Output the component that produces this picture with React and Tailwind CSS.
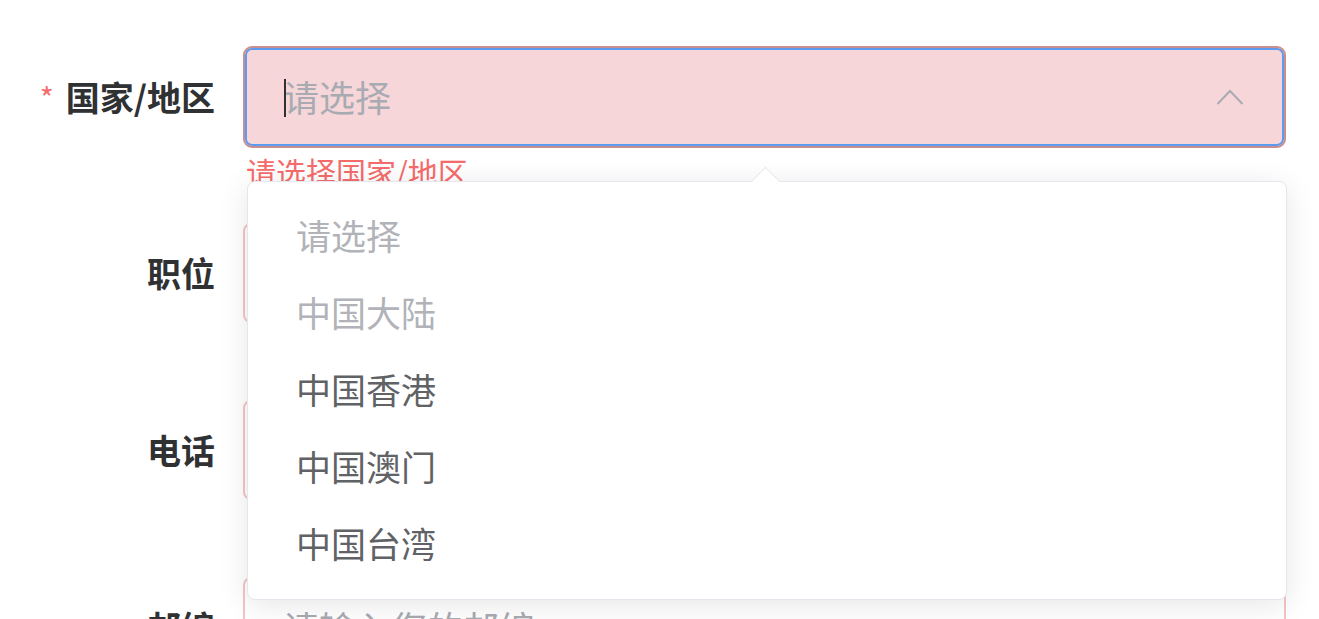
import React from "react";

const FONT = { fontFamily: '"Noto Sans CJK SC", "Noto Sans", sans-serif' };

function Label({ children, required }) {
  return (
    <div className="w-[215px] shrink-0 flex items-center justify-end text-[34px] font-bold text-[#303133] leading-none">
      {required && <span className="text-[#f56c6c] mr-[12px] text-[30px] font-normal">*</span>}
      <span>{children}</span>
    </div>
  );
}

function PlainInput({ placeholder }) {
  return (
    <div className="w-[1043px] h-[100px] rounded-[8px] border-2 border-[#f5c4c4] bg-white flex items-center pl-[38px] text-[36px] text-[#a8abb2]">
      {placeholder}
    </div>
  );
}

export default function App() {
  const options = [
    { t: "请选择", d: true },
    { t: "中国大陆", d: true },
    { t: "中国香港" },
    { t: "中国澳门" },
    { t: "中国台湾" },
  ];
  return (
    <div className="w-[1319px] h-[619px] overflow-hidden bg-white relative" style={FONT}>
      <div className="pt-[46px] flex flex-col">
        {/* Row 1 */}
        <div className="flex items-center gap-[28px] h-[102px] relative z-10">
          <Label required>国家/地区</Label>
          <div className="relative w-[1043px] h-[102px]">
            <div className="w-full h-full rounded-[9px] border-2 border-[#c98f8f] bg-[#f7d6d9] shadow-[inset_0_0_0_2px_#5b9cf0] flex items-center pl-[38px] pr-[40px] relative">
              <span className="absolute left-[39px] top-[31px] w-[2px] h-[38px] bg-[#303133]" />
              <span className="text-[36px] text-[#a8abb2] leading-none -mt-[3px]">请选择</span>
              <svg className="ml-auto" width="28" height="18" viewBox="0 0 28 18" fill="none">
                <polyline points="1.5,16 14,3 26.5,16" stroke="#a8abb2" strokeWidth="2" />
              </svg>
            </div>
            <div className="absolute left-[3px] top-[110px] text-[30px] leading-none text-[#f56c6c] whitespace-nowrap">
              请选择国家/地区
            </div>
            {/* Dropdown */}
            <div className="absolute left-[4px] top-[135px] w-[1040px] rounded-[8px] border border-[#e4e7ed] bg-white shadow-[0_5px_30px_rgba(0,0,0,0.1)] pt-[14px] pb-[18px]">
              <div className="absolute left-[507px] top-[-11px] w-[21px] h-[21px] rotate-45 bg-white border-l border-t border-[#e4e7ed]" />
              {options.map((o) => (
                <div
                  key={o.t}
                  className={`h-[77px] flex items-center pl-[48px] text-[35px] leading-none ${o.d ? "text-[#b1b3b8]" : "text-[#606266]"}`}
                >
                  {o.t}
                </div>
              ))}
            </div>
          </div>
        </div>
        {/* Row 2 */}
        <div className="flex items-center gap-[28px] h-[100px] mt-[75px]">
          <Label>职位</Label>
          <PlainInput placeholder="请选择" />
        </div>
        {/* Row 3 */}
        <div className="flex items-center gap-[28px] h-[100px] mt-[77px]">
          <Label>电话</Label>
          <PlainInput placeholder="请输入您的电话" />
        </div>
        {/* Row 4 */}
        <div className="flex items-center gap-[28px] h-[100px] mt-[77px]">
          <Label>邮编</Label>
          <PlainInput placeholder="请输入您的邮编" />
        </div>
      </div>
    </div>
  );
}
